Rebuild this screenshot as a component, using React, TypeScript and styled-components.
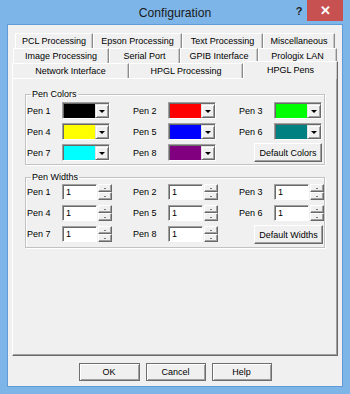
import React from "react";
import styled, { createGlobalStyle } from "styled-components";

const Global = createGlobalStyle`
  html, body { margin: 0; padding: 0; background: #ffffff; }
  body { font-family: "Liberation Sans", Arial, sans-serif; }
  * { box-sizing: border-box; }
`;

const Window = styled.div`
  width: 350px;
  height: 394px;
  background: #7db5e8;
  display: flex;
  flex-direction: column;
  padding: 0 7px 7px;
`;

const TitleBar = styled.div`
  height: 24px;
  display: grid;
  grid-template-columns: 1fr auto 1fr;
  align-items: start;
`;

const Title = styled.div`
  font-size: 12.2px;
  color: #1a1a1a;
  line-height: 14px;
  padding-top: 6px;
`;

const TitleButtons = styled.div`
  display: flex;
  justify-content: flex-end;
  align-items: flex-start;
`;

const HelpMark = styled.div`
  font-size: 11px;
  font-weight: bold;
  color: #222;
  width: 14px;
  margin-right: 1px;
  padding-top: 5px;
  text-align: center;
`;

const CloseBtn = styled.div`
  width: 36px;
  height: 21px;
  background: #c75050;
  color: #ffffff;
  font-size: 13px;
  font-weight: bold;
  display: flex;
  align-items: center;
  justify-content: center;
`;

const Client = styled.div`
  flex: 1;
  background: #f0f0f0;
  border: 1px solid #5f9bd6;
  display: flex;
  flex-direction: column;
  padding: 8px 4px 5px;
`;

const TabControl = styled.div`
  flex: 1;
  display: flex;
  flex-direction: column;
`;

const TabRow = styled.div<{ $indent: number }>`
  display: flex;
  height: 15px;
  margin-left: ${(p) => p.$indent}px;
`;

const Tab = styled.div<{ $w: number; $active?: boolean }>`
  width: ${(p) => p.$w}px;
  flex: none;
  font-size: 9px;
  color: #000;
  display: flex;
  align-items: center;
  justify-content: center;
  border-top: 1px solid #ffffff;
  border-left: 1px solid #ffffff;
  border-right: 1px solid #8c8c8c;
  box-shadow: inset -1px 0 0 #c8c8c8;
  background: #f0f0f0;
  ${(p) =>
    p.$active
      ? `
    position: relative;
    z-index: 1;
    height: 18px;
    margin-top: -2px;
    margin-bottom: -1px;
    padding-bottom: 2px;
    border-right: 1px solid #696969;
  `
      : ""}
`;

const Panel = styled.div`
  flex: 1;
  border-top: 1px solid #ffffff;
  border-left: 1px solid #ffffff;
  border-right: 1px solid #696969;
  border-bottom: 1px solid #696969;
  box-shadow: inset -1px -1px 0 #a0a0a0;
  padding: 10px 0 0 12px;
  display: flex;
  flex-direction: column;
  gap: 7px;
`;

const Group = styled.fieldset<{ $pt: number; $pb: number }>`
  margin: 0;
  width: 300px;
  min-width: 0;
  border: 1px solid #c2c2c2;
  box-shadow: inset 1px 1px 0 #ffffff, 1px 1px 0 #ffffff;
  padding: ${(p) => p.$pt}px 1px ${(p) => p.$pb}px 1px;
`;

const Legend = styled.legend`
  font-size: 9px;
  color: #000;
  margin-left: 4px;
  padding: 0 1px;
  line-height: 11px;
`;

const Grid = styled.div<{ $gap: number }>`
  display: grid;
  grid-template-columns: 106px 106px 1fr;
  row-gap: ${(p) => p.$gap}px;
  align-items: start;
`;

const Cell = styled.div`
  display: flex;
  align-items: center;
`;

const Label = styled.span`
  width: 35px;
  font-size: 9px;
  color: #000;
  flex: none;
`;

const Combo = styled.div`
  width: 48px;
  height: 17px;
  display: flex;
  border-top: 1px solid #a0a0a0;
  border-left: 1px solid #a0a0a0;
  border-right: 1px solid #ffffff;
  border-bottom: 1px solid #ffffff;
  box-shadow: inset 1px 1px 0 #696969;
  padding: 1px 0 0 1px;
  background: #fff;
`;

const Swatch = styled.div`
  flex: 1;
`;

const DropBtn = styled.div`
  width: 14px;
  flex: none;
  background: #f0f0f0;
  border-top: 1px solid #e3e3e3;
  border-left: 1px solid #e3e3e3;
  border-right: 1px solid #696969;
  border-bottom: 1px solid #696969;
  box-shadow: inset 1px 1px 0 #ffffff, inset -1px -1px 0 #a0a0a0;
  display: flex;
  align-items: center;
  justify-content: center;
`;

const DownArrow = styled.span<{ $size: number }>`
  width: 0;
  height: 0;
  border-left: ${(p) => p.$size}px solid transparent;
  border-right: ${(p) => p.$size}px solid transparent;
  border-top: ${(p) => p.$size}px solid #000;
`;

const UpArrow = styled.span<{ $size: number }>`
  width: 0;
  height: 0;
  border-left: ${(p) => p.$size}px solid transparent;
  border-right: ${(p) => p.$size}px solid transparent;
  border-bottom: ${(p) => p.$size}px solid #000;
`;

const Edit = styled.div`
  width: 35px;
  height: 16px;
  background: #ffffff;
  border-top: 1px solid #a0a0a0;
  border-left: 1px solid #a0a0a0;
  border-right: 1px solid #ffffff;
  border-bottom: 1px solid #ffffff;
  box-shadow: inset 1px 1px 0 #696969;
  font-size: 9px;
  color: #000;
  padding: 1px 0 0 3px;
  line-height: 12px;
`;

const Spin = styled.div`
  width: 14px;
  height: 16px;
  margin-left: 1px;
  display: flex;
  flex-direction: column;
`;

const SpinBtn = styled.div`
  flex: 1;
  background: #f0f0f0;
  border-top: 1px solid #ffffff;
  border-left: 1px solid #ffffff;
  border-right: 1px solid #696969;
  border-bottom: 1px solid #696969;
  box-shadow: inset -1px -1px 0 #a0a0a0;
  display: flex;
  align-items: center;
  justify-content: center;
`;

const PushButton = styled.div<{ $w: number; $h: number }>`
  width: ${(p) => p.$w}px;
  height: ${(p) => p.$h}px;
  font-size: 9px;
  color: #000;
  background: #f0f0f0;
  border-top: 1px solid #ffffff;
  border-left: 1px solid #ffffff;
  border-right: 1px solid #696969;
  border-bottom: 1px solid #696969;
  box-shadow: inset -1px -1px 0 #a0a0a0;
  display: flex;
  align-items: center;
  justify-content: center;
`;

const EndCell = styled.div`
  display: flex;
  justify-content: flex-end;
  padding-right: 1px;
  margin-top: -1px;
`;

const ButtonBar = styled.div`
  display: flex;
  justify-content: center;
  gap: 6px;
  margin-top: 7px;
`;

const DialogButton = styled(PushButton)`
  border: 1px solid #6e6e6e;
  box-shadow: inset 1px 1px 0 #ffffff, inset -1px -1px 0 #a0a0a0;
`;

const colors = ["#000000", "#ff0000", "#00ff00", "#ffff00", "#0000ff", "#008080", "#00ffff", "#800080"];

const row1 = [
  { t: "PCL Processing", w: 78 },
  { t: "Epson Processing", w: 89 },
  { t: "Text Processing", w: 81 },
  { t: "Miscellaneous", w: 72 },
];
const row2 = [
  { t: "Image Processing", w: 96 },
  { t: "Serial Port", w: 71 },
  { t: "GPIB Interface", w: 78 },
  { t: "Prologix LAN", w: 79 },
];
const row3 = [
  { t: "Network Interface", w: 117 },
  { t: "HPGL Processing", w: 114 },
  { t: "HPGL Pens", w: 95, active: true },
];

const ColorCombo = ({ color }: { color: string }) => (
  <Combo>
    <Swatch style={{ background: color }} />
    <DropBtn>
      <DownArrow $size={3} />
    </DropBtn>
  </Combo>
);

const WidthEdit = () => (
  <>
    <Edit>1</Edit>
    <Spin>
      <SpinBtn>
        <UpArrow $size={1.5} />
      </SpinBtn>
      <SpinBtn>
        <DownArrow $size={1.5} />
      </SpinBtn>
    </Spin>
  </>
);

export default function App() {
  return (
    <>
      <Global />
      <Window>
        <TitleBar>
          <div />
          <Title>Configuration</Title>
          <TitleButtons>
            <HelpMark>?</HelpMark>
            <CloseBtn>✕</CloseBtn>
          </TitleButtons>
        </TitleBar>
        <Client>
          <TabControl>
            <TabRow $indent={3}>
              {row1.map((t) => (
                <Tab key={t.t} $w={t.w}>{t.t}</Tab>
              ))}
            </TabRow>
            <TabRow $indent={1}>
              {row2.map((t) => (
                <Tab key={t.t} $w={t.w}>{t.t}</Tab>
              ))}
            </TabRow>
            <TabRow $indent={0}>
              {row3.map((t) => (
                <Tab key={t.t} $w={t.w} $active={t.active}>{t.t}</Tab>
              ))}
            </TabRow>
            <Panel>
              <Group $pt={2} $pb={2}>
                <Legend>Pen Colors</Legend>
                <Grid $gap={4}>
                  {colors.map((c, i) => (
                    <Cell key={i}>
                      <Label>Pen {i + 1}</Label>
                      <ColorCombo color={c} />
                    </Cell>
                  ))}
                  <EndCell>
                    <PushButton $w={68} $h={19}>Default Colors</PushButton>
                  </EndCell>
                </Grid>
              </Group>
              <Group $pt={1} $pb={3}>
                <Legend>Pen Widths</Legend>
                <Grid $gap={5}>
                  {colors.map((_, i) => (
                    <Cell key={i}>
                      <Label>Pen {i + 1}</Label>
                      <WidthEdit />
                    </Cell>
                  ))}
                  <EndCell>
                    <PushButton $w={69} $h={19}>Default Widths</PushButton>
                  </EndCell>
                </Grid>
              </Group>
            </Panel>
          </TabControl>
          <ButtonBar>
            <DialogButton $w={61} $h={18}>OK</DialogButton>
            <DialogButton $w={60} $h={18}>Cancel</DialogButton>
            <DialogButton $w={60} $h={18}>Help</DialogButton>
          </ButtonBar>
        </Client>
      </Window>
    </>
  );
}
